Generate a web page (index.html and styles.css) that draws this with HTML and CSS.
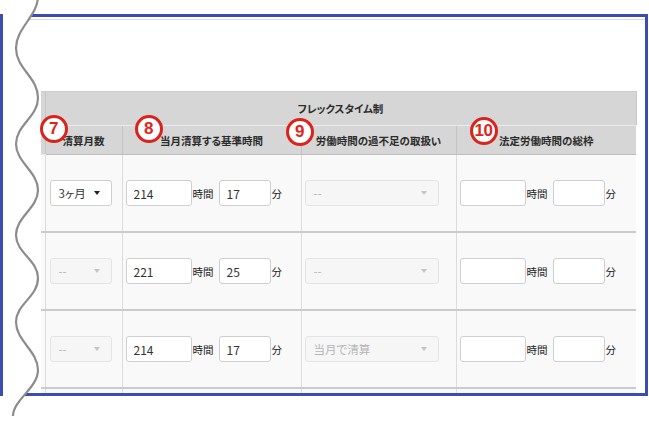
FILE: index.html
```html
<!DOCTYPE html>
<html lang="ja">
<head>
    <meta charset="UTF-8">
    <title>フレックスタイム制 設定</title>
    <link rel="stylesheet" href="styles.css">
</head>
<body>
    <div class="frame">
        <div class="panel">
            <table class="grid">
                <colgroup>
                    <col class="c-cut">
                    <col class="c-month">
                    <col class="c-base">
                    <col class="c-excess">
                    <col class="c-limit">
                </colgroup>
                <thead>
                    <tr class="head-top">
                        <th class="cut" rowspan="2"></th>
                        <th colspan="4">フレックスタイム制</th>
                    </tr>
                    <tr class="head-sub">
                        <th><span class="badge b7">7</span>清算月数</th>
                        <th><span class="badge b8">8</span>当月清算する基準時間</th>
                        <th><span class="badge b9">9</span>労働時間の過不足の取扱い</th>
                        <th><span class="badge b10">10</span>法定労働時間の総枠</th>
                    </tr>
                </thead>
                <tbody>
                    <!-- 1行目 -->
                    <tr>
                        <td class="cut"></td>
                        <td>
                            <div class="select select-month"><span>3ヶ月</span><i class="arrow"></i></div>
                        </td>
                        <td>
                            <div class="field">
                                <input class="hours" type="text" value="214"><span class="unit">時間</span>
                                <input class="mins" type="text" value="17"><span class="unit unit-min">分</span>
                            </div>
                        </td>
                        <td>
                            <div class="select select-wide is-disabled"><span>--</span><i class="arrow"></i></div>
                        </td>
                        <td>
                            <div class="field">
                                <input class="hours" type="text" value=""><span class="unit">時間</span>
                                <input class="mins" type="text" value=""><span class="unit unit-min">分</span>
                            </div>
                        </td>
                    </tr>
                    <!-- 2行目 -->
                    <tr>
                        <td class="cut"></td>
                        <td>
                            <div class="select select-month is-disabled"><span>--</span><i class="arrow"></i></div>
                        </td>
                        <td>
                            <div class="field">
                                <input class="hours" type="text" value="221"><span class="unit">時間</span>
                                <input class="mins" type="text" value="25"><span class="unit unit-min">分</span>
                            </div>
                        </td>
                        <td>
                            <div class="select select-wide is-disabled"><span>--</span><i class="arrow"></i></div>
                        </td>
                        <td>
                            <div class="field">
                                <input class="hours" type="text" value=""><span class="unit">時間</span>
                                <input class="mins" type="text" value=""><span class="unit unit-min">分</span>
                            </div>
                        </td>
                    </tr>
                    <!-- 3行目 -->
                    <tr>
                        <td class="cut"></td>
                        <td>
                            <div class="select select-month is-disabled"><span>--</span><i class="arrow"></i></div>
                        </td>
                        <td>
                            <div class="field">
                                <input class="hours" type="text" value="214"><span class="unit">時間</span>
                                <input class="mins" type="text" value="17"><span class="unit unit-min">分</span>
                            </div>
                        </td>
                        <td>
                            <div class="select select-wide is-disabled"><span>当月で清算</span><i class="arrow"></i></div>
                        </td>
                        <td>
                            <div class="field">
                                <input class="hours" type="text" value=""><span class="unit">時間</span>
                                <input class="mins" type="text" value=""><span class="unit unit-min">分</span>
                            </div>
                        </td>
                    </tr>
                    <!-- 切れている行 -->
                    <tr class="row-more">
                        <td class="cut"></td>
                        <td></td>
                        <td></td>
                        <td></td>
                        <td></td>
                    </tr>
                </tbody>
            </table>
        </div>
    </div>

    <!-- 省略を示す波線 -->
    <svg class="tear" width="60" height="429" viewBox="0 0 60 429">
        <path class="tear-fill" d="M3,-4 L38,-4 C38,16 16,28 16,48 C16,69 38,77 38,98 C38,117 16,125 16,144 C16,162 38,172 38,190 C38,208 16,217 16,235 C16,253 38,260 38,278 C38,297 16,304 16,322 C16,341 38,351 38,370 C38,388 13,400 13,416 L13,429 L3,429 Z"/>
        <path class="tear-line" d="M38,-4 C38,16 16,28 16,48 C16,69 38,77 38,98 C38,117 16,125 16,144 C16,162 38,172 38,190 C38,208 16,217 16,235 C16,253 38,260 38,278 C38,297 16,304 16,322 C16,341 38,351 38,370 C38,388 13,400 13,416"/>
    </svg>
</body>
</html>
```

FILE: styles.css
```css
/* General */
body {
    margin: 0;
    padding-top: 14px;
    background-color: #fff;
    font-family: "Noto Sans CJK JP", sans-serif;
    color: #333;
}

/* 青枠 */
.frame {
    position: relative;
    width: 648px;
    height: 382px;
    box-sizing: border-box;
    border: 3px solid #3b4cb2;
    overflow: hidden;
}

.panel {
    margin-top: 2px;
    border-top: 1px solid #dadada;
    padding: 71px 0 0 38px;
}

/* Table */
.grid {
    border-collapse: collapse;
    table-layout: fixed;
    width: 595px;
}

.c-cut { width: 4px; }
.c-month { width: 77px; }
.c-base { width: 179px; }
.c-excess { width: 155px; }
.c-limit { width: 180px; }

th {
    position: relative;
    padding: 0;
    background-color: #d6d6d6;
    font-size: 10.5px;
    font-weight: bold;
    color: #2b2b2b;
    text-align: center;
    font-feature-settings: "palt";
}

.head-top th {
    height: 33px;
    border-top: 1px solid #cdcdcd;
    border-right: 1px solid #c6c6c6;
    border-bottom: 1px solid #ebebeb;
}

.head-sub th {
    height: 27px;
    border-left: 1px solid #c3c3c3;
    border-bottom: 1px solid #bdbdbd;
    padding-top: 1px;
}

td {
    height: 76px;
    padding: 0 3px;
    background-color: #f9f9f9;
    border-left: 1px solid #dcdcdc;
    border-bottom: 2px solid #cbcbcb;
}

td.cut,
th.cut {
    border-left: none;
    padding: 0;
}

/* 番号バッジ */
.badge {
    position: absolute;
    width: 28px;
    height: 28px;
    box-sizing: border-box;
    border: 3px solid #d9231d;
    border-radius: 50%;
    background-color: #fff;
    color: #e0261b;
    font-family: "Liberation Sans", sans-serif;
    font-size: 17px;
    font-weight: bold;
    line-height: 22px;
    text-align: center;
    letter-spacing: -0.5px;
}

.b7 { left: -6px; top: -11px; }
.b8 { left: 12px; top: -11px; }
.b9 { left: -16px; top: -8px; }
.b10 { left: 13px; top: -9px; }

/* 入力 */
.field {
    display: flex;
    align-items: center;
}

input {
    height: 26px;
    box-sizing: border-box;
    margin: 0;
    padding: 0 7px;
    border: 1px solid #cfcfcf;
    border-radius: 3px;
    background-color: #fff;
    font-family: "Noto Sans CJK JP", sans-serif;
    font-size: 12px;
    color: #333;
}

input.hours { width: 66px; }
input.mins { width: 52px; }

.unit {
    margin: 0 5px 0 1px;
    font-size: 10.5px;
    color: #222;
}

.unit-min {
    margin: 0 0 0 1px;
}

/* セレクト */
.select {
    display: flex;
    align-items: center;
    justify-content: space-between;
    height: 26px;
    box-sizing: border-box;
    padding: 0 11px 0 8px;
    border: 1px solid #cfcfcf;
    border-radius: 3px;
    background-color: #fff;
    font-size: 11.5px;
    color: #333;
    font-feature-settings: "palt";
}

.select-month { width: 62px; margin-left: 1px; }
.select-wide { width: 134px; }

.arrow {
    width: 0;
    height: 0;
    border-left: 3.5px solid transparent;
    border-right: 3.5px solid transparent;
    border-top: 4px solid #222;
}

.select.is-disabled {
    background-color: #f6f6f6;
    border-color: #e4e4e4;
    color: #b5b5b5;
}

.select.is-disabled .arrow {
    border-top-color: #c4c4c4;
}

.row-more td {
    border-bottom: none;
}

/* 波線 */
.tear {
    position: absolute;
    left: 0;
    top: 0;
}

.tear-fill {
    fill: #fff;
}

.tear-line {
    fill: none;
    stroke: #8c8c8c;
    stroke-width: 2.2;
}
```
